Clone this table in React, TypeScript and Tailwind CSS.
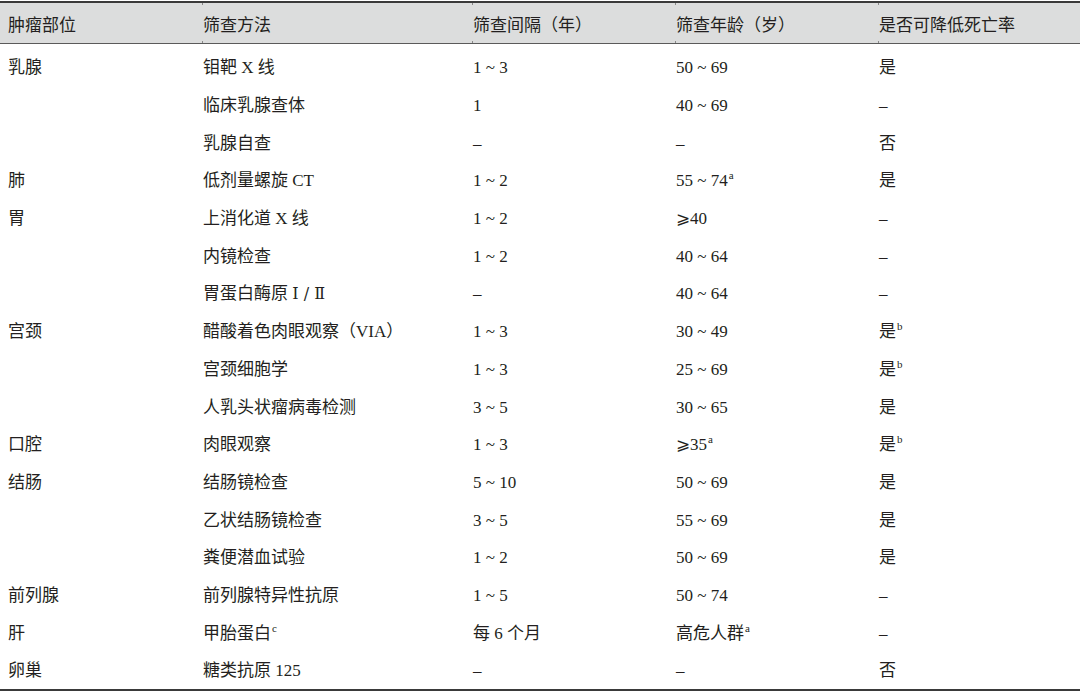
import React from 'react';

type Cell = React.ReactNode;

const Sup: React.FC<{ children: React.ReactNode }> = ({ children }) => (
    <sup className="text-[11px] relative -top-[7px] ml-[1px]">{children}</sup>
);

const Roman: React.FC<{ children: React.ReactNode }> = ({ children }) => (
    <span style={{ fontFamily: '"DejaVu Serif", "Liberation Serif", serif' }} className="text-[16px]">{children}</span>
);

const rows: Cell[][] = [
    ['乳腺', '钼靶 X 线', '1 ~ 3', '50 ~ 69', '是'],
    ['', '临床乳腺查体', '1', '40 ~ 69', '–'],
    ['', '乳腺自查', '–', '–', '否'],
    ['肺', '低剂量螺旋 CT', '1 ~ 2', <>55 ~ 74<Sup>a</Sup></>, '是'],
    ['胃', '上消化道 X 线', '1 ~ 2', '⩾40', '–'],
    ['', '内镜检查', '1 ~ 2', '40 ~ 64', '–'],
    ['', <>胃蛋白酶原 <Roman>Ⅰ / Ⅱ</Roman></>, '–', '40 ~ 64', '–'],
    ['宫颈', '醋酸着色肉眼观察（VIA）', '1 ~ 3', '30 ~ 49', <>是<Sup>b</Sup></>],
    ['', '宫颈细胞学', '1 ~ 3', '25 ~ 69', <>是<Sup>b</Sup></>],
    ['', '人乳头状瘤病毒检测', '3 ~ 5', '30 ~ 65', '是'],
    ['口腔', '肉眼观察', '1 ~ 3', <>⩾35<Sup>a</Sup></>, <>是<Sup>b</Sup></>],
    ['结肠', '结肠镜检查', '5 ~ 10', '50 ~ 69', '是'],
    ['', '乙状结肠镜检查', '3 ~ 5', '55 ~ 69', '是'],
    ['', '粪便潜血试验', '1 ~ 2', '50 ~ 69', '是'],
    ['前列腺', '前列腺特异性抗原', '1 ~ 5', '50 ~ 74', '–'],
    ['肝', <>甲胎蛋白<Sup>c</Sup></>, '每 6 个月', <>高危人群<Sup>a</Sup></>, '–'],
    ['卵巢', '糖类抗原 125', '–', '–', '否'],
];

const headers = ['肿瘤部位', '筛查方法', '筛查间隔（年）', '筛查年龄（岁）', '是否可降低死亡率'];

const cols = 'grid grid-cols-[202px_270px_203px_203px_202px]';

export default function App() {
    return (
        <div
            className="w-[1080px] h-[695px] bg-white text-[#231f20] text-[17px] leading-none overflow-hidden"
            style={{ fontFamily: '"Liberation Serif", "Noto Sans CJK SC", serif' }}
        >
            <div className="pt-[1px]">
                <div className={`${cols} h-[43px] bg-[#dcdddd] border-t-2 border-b border-t-[#3a3a3a] border-b-[#5a5a5a]`}>
                    {headers.map((h, i) => (
                        <div
                            key={i}
                            className={`relative flex items-center pt-[5px] ${i === 0 ? 'pl-[8px]' : 'pl-[1px] before:absolute before:left-0 before:top-0 before:h-[2px] before:w-px before:bg-[#888] after:absolute after:left-0 after:bottom-0 after:h-[2px] after:w-px after:bg-[#888]'}`}
                        >
                            {h}
                        </div>
                    ))}
                </div>
                <div className="pt-[4px] border-b-2 border-[#3a3a3a]">
                    {rows.map((r, ri) => (
                        <div key={ri} className={`${cols} h-[37.7px]`}>
                            {r.map((c, ci) => (
                                <div key={ci} className={`flex items-center pt-[2px] ${ci === 0 ? 'pl-[8px]' : 'pl-[1px]'}`}>
                                    <span className="whitespace-nowrap">{c}</span>
                                </div>
                            ))}
                        </div>
                    ))}
                </div>
            </div>
        </div>
    );
}
